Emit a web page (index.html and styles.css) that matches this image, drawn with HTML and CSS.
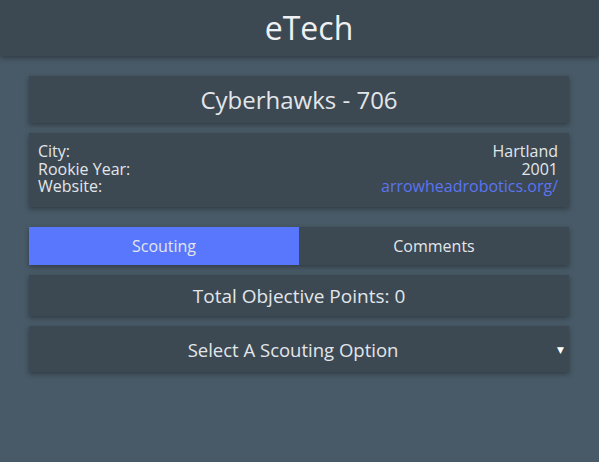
FILE: index.html
```html
<!DOCTYPE html>
<html>
<head>
<meta charset="utf-8">
<link rel="stylesheet" href="styles.css">
</head>
<body>
<header class="topbar"><h1 class="title">eTech</h1></header>
<main class="content">
  <section class="card team-name">Cyberhawks - 706</section>
  <section class="card details">
    <div class="row"><span>City:</span><span>Hartland</span></div>
    <div class="row"><span>Rookie Year:</span><span>2001</span></div>
    <div class="row"><span>Website:</span><a class="link" href="#">arrowheadrobotics.org/</a></div>
  </section>
  <nav class="tabs">
    <div class="tab active">Scouting</div>
    <div class="tab">Comments</div>
  </nav>
  <section class="card points">Total Objective Points: 0</section>
  <section class="card select">Select A Scouting Option<span class="caret">▼</span></section>
</main>
</body>
</html>
```

FILE: styles.css
```css
html, body {
  margin: 0;
  padding: 0;
}
body {
  background: #485a67;
  font-family: "Open Sans", "DejaVu Sans", sans-serif;
  color: #e2e6ea;
  width: 599px;
  height: 462px;
  overflow: hidden;
}
.topbar {
  height: 56px;
  background: #3c4852;
  display: flex;
  align-items: center;
  justify-content: center;
  padding-left: 19px;
  box-sizing: border-box;
  box-shadow: 0 2px 5px rgba(0,0,0,0.35);
}
.title {
  margin: 0;
  font-weight: 400;
  font-size: 32px;
  line-height: 1;
  color: #eef0f2;
}
.content {
  padding: 20px 30px 0 29px;
  display: flex;
  flex-direction: column;
}
.card {
  background: #3c4852;
  box-shadow: 0 2px 5px rgba(0,0,0,0.35);
}
.team-name {
  height: 47px;
  display: flex;
  align-items: center;
  justify-content: center;
  font-size: 24px;
}
.details {
  margin-top: 10px;
  height: 74px;
  box-sizing: border-box;
  padding: 10px 11px 0 9px;
  font-size: 16px;
  line-height: 17.5px;
}
.row {
  display: flex;
  justify-content: space-between;
}
.link {
  color: #5a75f0;
  text-decoration: none;
}
.tabs {
  margin-top: 20px;
  display: flex;
  height: 38px;
  background: #3c4852;
  box-shadow: 0 2px 5px rgba(0,0,0,0.35);
}
.tab {
  flex: 1;
  display: flex;
  align-items: center;
  justify-content: center;
  font-size: 16px;
}
.tab.active {
  background: #5877fd;
}
.points {
  margin-top: 10px;
  height: 41px;
  display: flex;
  align-items: center;
  justify-content: center;
  font-size: 19px;
}
.select {
  margin-top: 10px;
  height: 46px;
  box-sizing: border-box;
  padding-right: 12px;
  display: flex;
  align-items: center;
  justify-content: center;
  font-size: 18.5px;
  position: relative;
}
.caret {
  position: absolute;
  right: 5px;
  top: 17px;
  font-size: 9px;
  color: #ffffff;
}
```
